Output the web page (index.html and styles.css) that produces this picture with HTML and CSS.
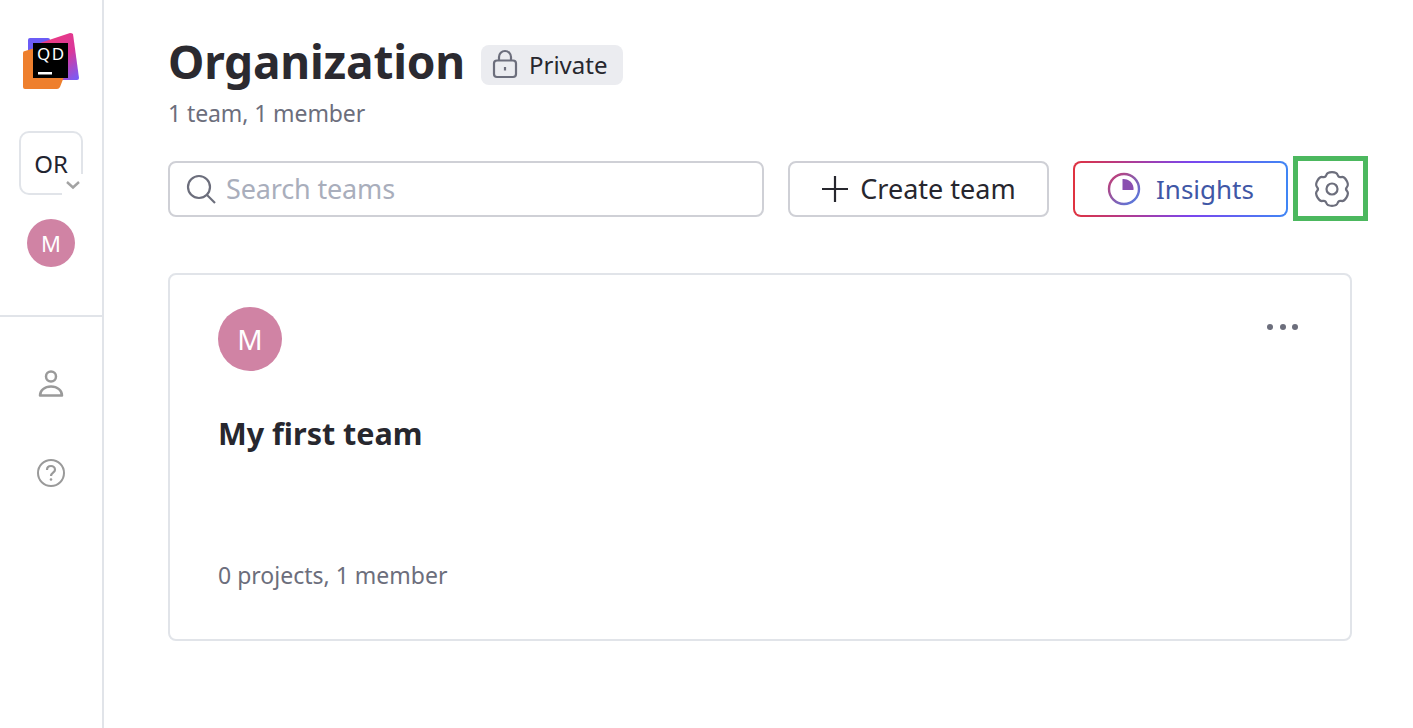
FILE: index.html
```html
<!DOCTYPE html>
<html lang="en">

<head>
    <meta charset="UTF-8">
    <title>Organization</title>
    <link rel="stylesheet" href="styles.css">
</head>

<body>
    <aside class="sidebar">
        <div class="sidebar-top">
            <svg class="logo" width="56" height="56" viewBox="0 0 56 56">
                <defs>
                    <linearGradient id="logoPink" x1="0.2" y1="0" x2="0.9" y2="1">
                        <stop offset="0" stop-color="#ee3a7e" />
                        <stop offset="0.55" stop-color="#d9379b" />
                        <stop offset="1" stop-color="#7a5cf5" />
                    </linearGradient>
                </defs>
                <rect x="5" y="5" width="22" height="22" rx="2" fill="#6b5cf6" />
                <path d="M17 10 L47 0 q2 0 3 1 L56 45 q0 2-2 2 L24 47 Z" fill="url(#logoPink)" />
                <path d="M2 18 L22 12 L44 36 L37 54 q-1 2-3 2 L2 56 q-2 0-2-2 L0 20 q0-2 2-2Z" fill="#ee7f2d" />
                <rect x="10" y="10" width="35" height="35" fill="#000" />
                <text x="14" y="27" class="logo-text">QD</text>
                <rect x="15" y="39" width="14" height="2.500" fill="#fff" />
            </svg>
            <div class="org-switch">
                <span>OR</span>
                <span class="org-chevron">
                    <svg width="16" height="10" viewBox="0 0 16 10">
                        <path d="M2 2l6 5.500L14 2" fill="none" stroke="#a3a3a3" stroke-width="2.400" />
                    </svg>
                </span>
            </div>
            <div class="avatar avatar-small">M</div>
        </div>
        <nav class="sidebar-nav">
            <svg width="28" height="30" viewBox="0 0 28 30" fill="none" stroke="#9a9a9a" stroke-width="2.500">
                <circle cx="14" cy="7.500" r="5" />
                <path d="M3 26.500c0-5 4.500-9 11-9s11 4 11 9z" stroke-linejoin="round" />
            </svg>
            <svg width="30" height="30" viewBox="0 0 30 30" fill="none" stroke="#9a9a9a" stroke-width="2">
                <circle cx="15" cy="15" r="13" />
                <path d="M11 12c0-2.500 1.800-4 4-4s4 1.500 4 3.700c0 3-4 3-4 6.300" stroke-width="2.200" />
                <circle cx="15" cy="21.500" r="1.300" fill="#9a9a9a" stroke="none" />
            </svg>
        </nav>
    </aside>

    <main class="content">
        <div class="title-row">
            <h1>Organization</h1>
            <span class="badge">
                <svg width="26" height="30" viewBox="0 0 26 30" fill="none" stroke="#6c6e7c" stroke-width="2.200">
                    <rect x="2" y="11.500" width="22" height="16.500" rx="3" />
                    <path d="M7 11.500V8a6 6 0 0 1 12 0v3.500" />
                    <path d="M13 18v3.500" />
                </svg>
                Private
            </span>
        </div>
        <p class="subtitle">1 team, 1 member</p>

        <div class="toolbar">
            <label class="search">
                <svg width="30" height="30" viewBox="0 0 30 30" fill="none" stroke="#6c6e7c" stroke-width="2.200">
                    <circle cx="13" cy="13" r="11" />
                    <path d="M21 21l8 8" />
                </svg>
                <span>Search teams</span>
            </label>
            <button class="btn btn-create">
                <svg width="28" height="28" viewBox="0 0 28 28" stroke="#27272e" stroke-width="2.200">
                    <path d="M14 1v26M1 14h26" />
                </svg>
                Create team
            </button>
            <button class="btn-insights">
                <svg width="34" height="34" viewBox="0 0 34 34" fill="none">
                    <defs>
                        <linearGradient id="ringGrad" x1="0" y1="0" x2="1" y2="1">
                            <stop offset="0" stop-color="#c9386f" />
                            <stop offset="1" stop-color="#4d7fe8" />
                        </linearGradient>
                    </defs>
                    <circle cx="17" cy="17" r="15" stroke="url(#ringGrad)" stroke-width="2.400" />
                    <path d="M15.500 7a10 10 0 0 1 11 11h-11z" fill="#8a4fb0" />
                </svg>
                Insights
            </button>
            <div class="gear-box">
                <svg width="38" height="38" viewBox="-19 -19 38 38" fill="none" stroke="#6c6e7c" stroke-width="2.200">
                    <path d="M0-16.820Q4.820-16.820 5.660-14.040Q6.500-11.260 9.330-11.930Q12.160-12.590 14.570-8.410Q16.980-4.230 14.990-2.120Q13 0 14.990 2.120Q16.980 4.230 14.570 8.410Q12.160 12.590 9.330 11.930Q6.500 11.260 5.660 14.040Q4.820 16.820 0 16.820Q-4.820 16.820-5.660 14.040Q-6.500 11.260-9.330 11.930Q-12.160 12.590-14.570 8.410Q-16.980 4.230-14.990 2.120Q-13 0-14.990-2.120Q-16.980-4.230-14.570-8.410Q-12.160-12.590-9.330-11.930Q-6.500-11.260-5.660-14.040Q-4.820-16.820 0-16.820Z" />
                    <circle r="5.500" />
                </svg>
            </div>
        </div>

        <section class="team-card">
            <div class="card-head">
                <div class="avatar avatar-large">M</div>
                <div class="card-menu"><i></i><i></i><i></i></div>
            </div>
            <h2>My first team</h2>
            <p class="card-meta">0 projects, 1 member</p>
        </section>
    </main>
</body>

</html>
```

FILE: styles.css
```css
* {
    box-sizing: border-box;
}

body {
    margin: 0;
    height: 728px;
    display: flex;
    overflow: hidden;
    background: #fff;
    font-family: "Noto Sans", sans-serif;
    color: #27272e;
}

.sidebar {
    width: 104px;
    flex-shrink: 0;
    border-right: 2px solid #e1e4e9;
}

.sidebar-top {
    height: 317px;
    padding-top: 33px;
    border-bottom: 2px solid #e1e4e9;
    display: flex;
    flex-direction: column;
    align-items: center;
}

.logo-text {
    font-family: "Noto Sans", sans-serif;
    font-size: 17px;
    letter-spacing: 1.5px;
    fill: #fff;
}

.org-switch {
    position: relative;
    width: 64px;
    height: 64px;
    margin-top: 42px;
    border: 2px solid #e1e4e9;
    border-radius: 10px;
    display: flex;
    align-items: center;
    justify-content: center;
    font-size: 24px;
    color: #1f2430;
}

.org-chevron {
    position: absolute;
    right: -3px;
    bottom: -3px;
    width: 22px;
    height: 22px;
    background: #fff;
    display: flex;
    align-items: center;
    justify-content: center;
    border-top-left-radius: 6px;
}

.avatar {
    border-radius: 50%;
    background: #d083a4;
    color: #fff;
    display: flex;
    align-items: center;
    justify-content: center;
}

.avatar-small {
    width: 48px;
    height: 48px;
    margin-top: 24px;
    font-size: 22px;
}

.avatar-large {
    width: 64px;
    height: 64px;
    font-size: 28px;
}

.sidebar-nav {
    display: flex;
    flex-direction: column;
    align-items: center;
    gap: 59px;
    padding-top: 52px;
}

.content {
    flex: 1;
    padding: 0 61px 0 64px;
}

.title-row {
    display: flex;
    align-items: center;
    gap: 16px;
    height: 62px;
    margin-top: 30px;
}

h1 {
    margin: 0;
    font-size: 46px;
    font-weight: 700;
    letter-spacing: -0.2px;
    line-height: 62px;
    color: #2b2a30;
}

.badge {
    height: 40px;
    margin-top: 8px;
    padding: 0 16px 2px 11px;
    display: flex;
    align-items: center;
    gap: 11px;
    background: #ebecf0;
    border-radius: 8px;
    font-size: 24px;
    color: #27272e;
}

.subtitle {
    margin: 5px 0 0;
    font-size: 23px;
    letter-spacing: -0.1px;
    line-height: 32px;
    color: #6c6e7c;
}

.toolbar {
    display: flex;
    align-items: center;
    margin-top: 27px;
    height: 65px;
}

.search {
    width: 596px;
    height: 56px;
    padding-left: 16px;
    display: flex;
    align-items: center;
    gap: 10px;
    border: 2px solid #cfd0d6;
    border-radius: 8px;
    font-size: 27px;
    letter-spacing: -0.15px;
    color: #a9aebc;
}

.btn {
    width: 261px;
    height: 56px;
    margin-left: 24px;
    display: flex;
    align-items: center;
    justify-content: center;
    gap: 11px;
    background: #fff;
    border: 2px solid #cfd0d6;
    border-radius: 8px;
    font: 27px "Noto Sans", sans-serif;
    color: #27272e;
}

.btn-insights {
    width: 215px;
    height: 56px;
    margin-left: 24px;
    display: flex;
    align-items: center;
    justify-content: center;
    gap: 15px;
    border: 2px solid transparent;
    border-radius: 8px;
    background: linear-gradient(#fff, #fff) padding-box, linear-gradient(90deg, #e0323f, #7a45ee 55%, #3f86f5) border-box;
    font: 26px "Noto Sans", sans-serif;
    color: #3f57a6;
}

.gear-box {
    width: 75px;
    height: 65px;
    margin-left: 5px;
    padding-left: 2px;
    border: 5px solid #4cb85f;
    display: flex;
    align-items: center;
    justify-content: center;
}

.team-card {
    width: 1184px;
    height: 368px;
    margin-top: 52px;
    padding: 32px 52px 0 48px;
    border: 2px solid #e1e4e9;
    border-radius: 8px;
    display: flex;
    flex-direction: column;
}

.card-head {
    display: flex;
    justify-content: space-between;
    align-items: flex-start;
}

.card-menu {
    display: flex;
    gap: 6.5px;
    padding-top: 17px;
}

.card-menu i {
    width: 6px;
    height: 6px;
    border-radius: 50%;
    background: #6c6e7c;
}

h2 {
    margin: 42px 0 0;
    font-size: 30.5px;
    line-height: 40px;
    font-weight: 700;
    color: #27272e;
}

.card-meta {
    margin: auto 0 49px;
    font-size: 23px;
    line-height: 30px;
    color: #6c6e7c;
}
```
